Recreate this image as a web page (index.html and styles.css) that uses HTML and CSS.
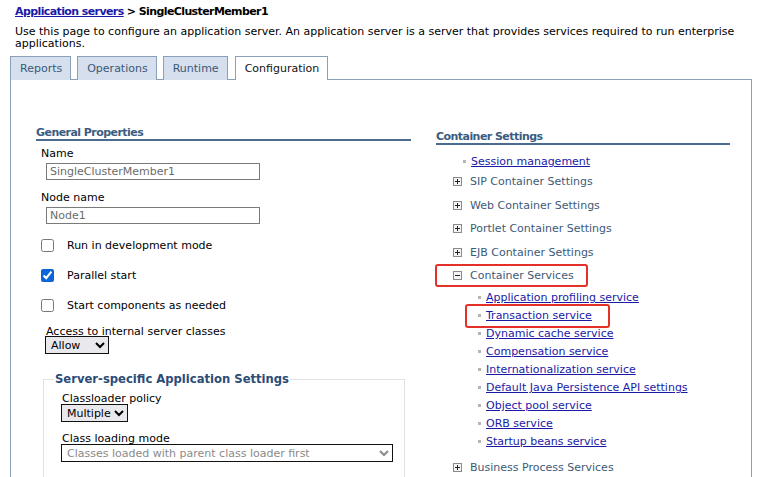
FILE: index.html
```html
<!DOCTYPE html>
<html>
<head>
<meta charset="utf-8">
<link rel="stylesheet" href="styles.css">
</head>
<body>
<div class="header">
  <div class="crumb"><a href="#">Application servers</a> &gt; SingleClusterMember1</div>
  <p class="desc">Use this page to configure an application server. An application server is a server that provides services required to run enterprise applications.</p>
</div>
<div class="tabs">
  <div class="tab">Reports</div>
  <div class="tab">Operations</div>
  <div class="tab">Runtime</div>
  <div class="tab active">Configuration</div>
</div>
<div class="panel">
  <div class="col-left">
    <h3 class="sect">General Properties</h3>
    <div class="lbl">Name</div>
    <input class="txt" type="text" value="SingleClusterMember1" readonly>
    <div class="lbl lbl2">Node name</div>
    <input class="txt" type="text" value="Node1" readonly>
    <label class="cb first"><input type="checkbox"><span>Run in development mode</span></label>
    <label class="cb"><input type="checkbox" checked><span>Parallel start</span></label>
    <label class="cb"><input type="checkbox"><span>Start components as needed</span></label>
    <div class="lbl lbl3">Access to internal server classes</div>
    <select class="sel sel-allow"><option>Allow</option></select>
    <fieldset class="fs">
      <legend>Server-specific Application Settings</legend>
      <div class="lbl lbl4">Classloader policy</div>
      <select class="sel sel-mult"><option>Multiple</option></select>
      <div class="lbl lbl5">Class loading mode</div>
      <select class="sel sel-mode" disabled><option>Classes loaded with parent class loader first</option></select>
    </fieldset>
  </div>
  <div class="col-right">
    <h3 class="sect sect-r">Container Settings</h3>
    <ul class="tree">
      <li class="leaf top"><a href="#">Session management</a></li>
      <li class="node n1"><svg class="pm" width="9" height="9" viewBox="0 0 9 9"><rect x="0.5" y="0.5" width="8" height="8" fill="#f4f4f4" stroke="#8a8a8a"/><path d="M2 4.5h5M4.5 2v5" stroke="#222" stroke-width="1"/></svg>SIP Container Settings</li>
      <li class="node n2"><svg class="pm" width="9" height="9" viewBox="0 0 9 9"><rect x="0.5" y="0.5" width="8" height="8" fill="#f4f4f4" stroke="#8a8a8a"/><path d="M2 4.5h5M4.5 2v5" stroke="#222" stroke-width="1"/></svg>Web Container Settings</li>
      <li class="node"><svg class="pm" width="9" height="9" viewBox="0 0 9 9"><rect x="0.5" y="0.5" width="8" height="8" fill="#f4f4f4" stroke="#8a8a8a"/><path d="M2 4.5h5M4.5 2v5" stroke="#222" stroke-width="1"/></svg>Portlet Container Settings</li>
      <li class="node n2"><svg class="pm" width="9" height="9" viewBox="0 0 9 9"><rect x="0.5" y="0.5" width="8" height="8" fill="#f4f4f4" stroke="#8a8a8a"/><path d="M2 4.5h5M4.5 2v5" stroke="#222" stroke-width="1"/></svg>EJB Container Settings</li>
      <li class="node hl-wrap"><svg class="pm" width="9" height="9" viewBox="0 0 9 9"><rect x="0.5" y="0.5" width="8" height="8" fill="#f4f4f4" stroke="#8a8a8a"/><path d="M2 4.5h5" stroke="#222" stroke-width="1"/></svg>Container Services<span class="hl hl-1"></span></li>
      <li class="sub first-sub"><a href="#">Application profiling service</a></li>
      <li class="sub hl-wrap"><a href="#">Transaction service</a><span class="hl hl-2"></span></li>
      <li class="sub"><a href="#">Dynamic cache service</a></li>
      <li class="sub"><a href="#">Compensation service</a></li>
      <li class="sub"><a href="#">Internationalization service</a></li>
      <li class="sub"><a href="#">Default Java Persistence API settings</a></li>
      <li class="sub"><a href="#">Object pool service</a></li>
      <li class="sub"><a href="#">ORB service</a></li>
      <li class="sub"><a href="#">Startup beans service</a></li>
      <li class="node last"><svg class="pm" width="9" height="9" viewBox="0 0 9 9"><rect x="0.5" y="0.5" width="8" height="8" fill="#f4f4f4" stroke="#8a8a8a"/><path d="M2 4.5h5M4.5 2v5" stroke="#222" stroke-width="1"/></svg>Business Process Services</li>
    </ul>
  </div>
</div>
</body>
</html>
```
FILE: styles.css
```css
html, body {
  margin: 0;
  padding: 0;
  background: #fff;
  overflow: hidden;
}
body {
  font-family: "DejaVu Sans", Verdana, sans-serif;
  font-size: 11px;
  color: #000;
  height: 477px;
}
a {
  color: #1a1aa6;
  text-decoration: underline;
}
.header {
  padding: 5px 0 0 15px;
}
.crumb {
  font-weight: bold;
  line-height: 14px;
  letter-spacing: -0.6px;
}
.crumb a {
  color: #1a1aa6;
}
.desc {
  margin: 7px 0 0 0;
  line-height: 12px;
  width: 735px;
}
.tabs {
  display: flex;
  gap: 6px;
  margin: 6px 0 0 10px;
  position: relative;
  z-index: 1;
  height: 24px;
}
.tab {
  height: 24px;
  line-height: 24px;
  padding: 0 8px 0 9px;
  background: #d5dfee;
  border: 1px solid #8aa0b8;
  border-bottom: none;
  color: #3b5878;
  box-sizing: border-box;
}
.tab.active {
  background: #fff;
  color: #111;
  margin-left: 1px;
  padding: 0 8px 0 9px;
}
.panel {
  display: grid;
  grid-template-columns: 375px 294px;
  column-gap: 25px;
  padding: 1px 0 0 25px;
  margin: -1px 0 0 10px;
  width: 742px;
  height: 420px;
  border: 1px solid #8aa0b8;
  box-sizing: border-box;
}
.col-left, .col-right {
  display: flex;
  flex-direction: column;
  align-items: flex-start;
}
.sect {
  margin: 45px 0 0 0;
  font-size: 11px;
  line-height: 13px;
  font-weight: bold;
  color: #3a5c82;
  border-bottom: 2px solid #4a6c8f;
  align-self: stretch;
  letter-spacing: -0.55px;
}
.sect-r {
  margin-top: 50px;
  line-height: 12px;
}
.lbl {
  margin: 6px 0 0 5px;
  line-height: 13px;
}
.lbl2 { margin-top: 11px; }
.txt {
  margin: 3px 0 0 10px;
  width: 214px;
  height: 17px;
  box-sizing: border-box;
  border: 1px solid #7a7a7a;
  font-family: "DejaVu Sans", Verdana, sans-serif;
  font-size: 11px;
  color: #6b6b6b;
  padding: 0 3px;
  outline: none;
}
.cb {
  display: flex;
  align-items: center;
  margin: 13px 0 0 5px;
  height: 17px;
}
.cb.first { margin-top: 13px; }
.cb input {
  margin: 0;
  width: 13px;
  height: 13px;
  accent-color: #0a66d8;
}
.cb span {
  margin-left: 13px;
}
.lbl3 {
  margin: 11px 0 0 10px;
}
.sel {
  font-family: "DejaVu Sans", Verdana, sans-serif;
  font-size: 11px;
  height: 18px;
  border: 1px solid #111;
  border-radius: 0;
  background: #e9e9ed;
  color: #000;
  padding: 0 0 0 1px;
}
.sel-allow {
  margin: -2px 0 0 9px;
  width: 64px;
}
.fs {
  margin: 18px 0 0 7px;
  width: 362px;
  box-sizing: border-box;
  border: 1px solid #e2e2e2;
  border-bottom: none;
  padding: 0 0 0 18px;
  height: 120px;
}
.fs legend {
  font-size: 11.6px;
  font-weight: bold;
  color: #2c4c78;
  padding: 0 1px;
  margin-left: -8px;
  line-height: 14px;
}
.lbl4 { margin: 6px 0 0 0; }
.sel-mult {
  display: block;
  margin: -1px 0 0 -1px;
  width: 67px;
}
.lbl5 { margin: 10px 0 0 0; }
.sel-mode {
  display: block;
  margin: -1px 0 0 -1px;
  width: 332px;
  color: #8a8a8a;
  background: #fff;
  opacity: 1;
}
.tree {
  list-style: none;
  margin: 0;
  padding: 0;
  align-self: stretch;
}
.tree li {
  line-height: 13px;
  position: relative;
}
.leaf, .sub {
  display: flex;
  align-items: center;
}
.leaf::before, .sub::before {
  content: "";
  width: 3px;
  height: 3px;
  background: #b4b4b4;
  margin-right: 5px;
}
.leaf.top {
  margin: 10px 0 0 27px;
}
.node {
  display: flex;
  align-items: center;
  margin: 10px 0 0 17px;
  color: #3d5a78;
}
.node.n1 { margin-top: 7px; }
.node.n2 { margin-top: 11px; }
.node .pm { margin-right: 8px; }
.sub {
  margin: 5px 0 0 42px;
}
.sub.first-sub { margin-top: 9px; }
.node.last { margin-top: 13px; }
.hl {
  position: absolute;
  border: 2px solid #e5302a;
  border-radius: 3px;
  box-sizing: border-box;
  pointer-events: none;
}
.hl-1 {
  left: -18px;
  top: -5px;
  width: 153px;
  height: 23px;
}
.hl-2 {
  left: -13px;
  top: -5px;
  width: 145px;
  height: 24px;
}
```
